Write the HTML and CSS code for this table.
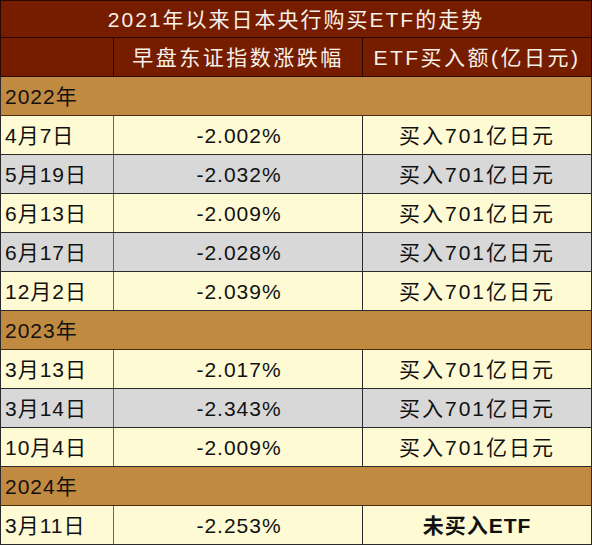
FILE: index.html
```html
<!DOCTYPE html>
<html lang="zh-CN">
<head>
<meta charset="utf-8">
<title>2021年以来日本央行购买ETF的走势</title>
<link rel="stylesheet" href="styles.css">
</head>
<body>
<table class="etf">
  <colgroup>
    <col class="c-date">
    <col class="c-pct">
    <col class="c-buy">
  </colgroup>
  <tr class="title"><td colspan="3">2021年以来日本央行购买ETF的走势</td></tr>
  <tr class="head"><td></td><td>早盘东证指数涨跌幅</td><td>ETF买入额(亿日元)</td></tr>
  <tr class="year"><td colspan="3">2022年</td></tr>
  <tr class="row"><td>4月7日</td><td>-2.002%</td><td>买入701亿日元</td></tr>
  <tr class="row alt"><td>5月19日</td><td>-2.032%</td><td>买入701亿日元</td></tr>
  <tr class="row"><td>6月13日</td><td>-2.009%</td><td>买入701亿日元</td></tr>
  <tr class="row alt"><td>6月17日</td><td>-2.028%</td><td>买入701亿日元</td></tr>
  <tr class="row"><td>12月2日</td><td>-2.039%</td><td>买入701亿日元</td></tr>
  <tr class="year"><td colspan="3">2023年</td></tr>
  <tr class="row"><td>3月13日</td><td>-2.017%</td><td>买入701亿日元</td></tr>
  <tr class="row alt"><td>3月14日</td><td>-2.343%</td><td>买入701亿日元</td></tr>
  <tr class="row"><td>10月4日</td><td>-2.009%</td><td>买入701亿日元</td></tr>
  <tr class="year"><td colspan="3">2024年</td></tr>
  <tr class="row"><td>3月11日</td><td>-2.253%</td><td class="strong">未买入ETF</td></tr>
</table>
</body>
</html>
```
FILE: styles.css
```css
html, body {
  margin: 0;
  padding: 0;
  background: #ffffff;
}

.etf {
  border-collapse: collapse;
  width: 591px;
  table-layout: fixed;
  font-family: "Liberation Sans", "Noto Sans CJK SC", sans-serif;
  font-size: 21px;
  letter-spacing: 1px;
  color: #111111;
}

.c-date { width: 113px; }
.c-pct { width: 249px; }
.c-buy { width: 229px; }

.etf td {
  padding: 0;
  height: 38px;
  border: 1px solid #2a2a2a;
  white-space: nowrap;
  line-height: 1;
}

.title td {
  height: 36px;
  background: #761d00;
  color: #f7f1ea;
  text-align: center;
  font-size: 21px;
  letter-spacing: 2px;
  border-color: #2a0800;
}

.head td {
  background: #761d00;
  color: #f7f1ea;
  text-align: center;
  font-size: 21px;
  letter-spacing: 2.5px;
  border-color: #2a0800;
}

.year td {
  background: #c18a41;
  text-align: left;
  padding-left: 4px;
  border-top-color: #5e5436;
  border-bottom-color: #4a2e0c;
}

.row td {
  background: #fdfad4;
  text-align: center;
}

.row.alt td {
  background: #d8d8d8;
}

.row td:first-child {
  text-align: left;
  padding-left: 4px;
  border-right-color: #666666;
}

.row td:nth-child(2) {
  padding-left: 2px;
}

.row td:nth-child(3) {
  letter-spacing: 2px;
}

.row td.strong {
  font-weight: bold;
  letter-spacing: 1px;
}
```
